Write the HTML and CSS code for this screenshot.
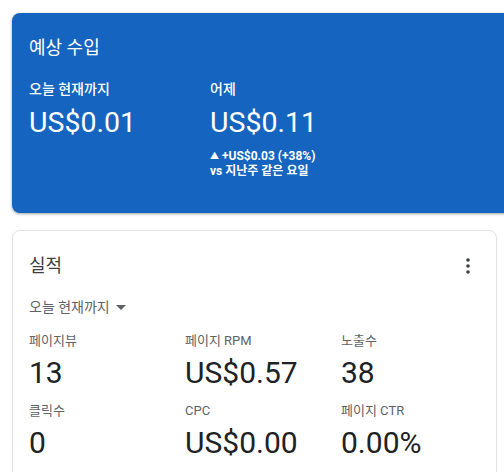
FILE: index.html
```html
<!DOCTYPE html>
<html lang="ko">
<head>
<meta charset="utf-8">
<link rel="stylesheet" href="styles.css">
</head>
<body>
<div class="page">
  <section class="card earnings">
    <h2 class="card-title">예상 수입</h2>
    <div class="earn-row">
      <div class="earn-col">
        <div class="earn-label">오늘 현재까지</div>
        <div class="earn-value">US$0.01</div>
      </div>
      <div class="earn-col">
        <div class="earn-label">어제</div>
        <div class="earn-value">US$0.11</div>
        <div class="earn-delta"><span class="tri">▲</span> +US$0.03 (+38%)</div>
        <div class="earn-delta">vs 지난주 같은 요일</div>
      </div>
    </div>
  </section>

  <section class="card perf">
    <div class="perf-head">
      <h2 class="card-title dark">실적</h2>
      <svg class="kebab" width="4" height="16" viewBox="0 0 4 16" aria-hidden="true">
        <circle cx="2" cy="2" r="1.8" fill="#3c4043"/>
        <circle cx="2" cy="8" r="1.8" fill="#3c4043"/>
        <circle cx="2" cy="14" r="1.8" fill="#3c4043"/>
      </svg>
    </div>
    <div class="range">오늘 현재까지 <span class="caret"></span></div>
    <div class="metrics">
      <div class="metric"><div class="m-label">페이지뷰</div><div class="m-value">13</div></div>
      <div class="metric"><div class="m-label">페이지 RPM</div><div class="m-value">US$0.57</div></div>
      <div class="metric"><div class="m-label">노출수</div><div class="m-value">38</div></div>
      <div class="metric"><div class="m-label">클릭수</div><div class="m-value">0</div></div>
      <div class="metric"><div class="m-label">CPC</div><div class="m-value">US$0.00</div></div>
      <div class="metric"><div class="m-label">페이지 CTR</div><div class="m-value">0.00%</div></div>
    </div>
  </section>
</div>
</body>
</html>
```

FILE: styles.css
```css
html, body {
  margin: 0;
  padding: 0;
  background: #ffffff;
  overflow: hidden;
}
body {
  font-family: Roboto, "Noto Sans CJK KR", sans-serif;
  width: 504px;
  height: 472px;
}
.page {
  padding: 13px 0 0 12px;
  display: flex;
  flex-direction: column;
  gap: 17px;
  overflow: hidden;
  height: 459px;
}
.card {
  box-sizing: border-box;
  border-radius: 8px;
  flex: none;
}
.earnings {
  width: 520px;
  height: 200px;
  background: #1565c0;
  color: #ffffff;
  padding: 22px 17px 0;
  box-shadow: 0 1px 2px rgba(60,64,67,0.3), 0 1px 3px 1px rgba(60,64,67,0.15);
}
.card-title {
  margin: 0;
  font-size: 18px;
  font-weight: 400;
  line-height: 26px;
}
.earn-row {
  display: flex;
  margin-top: 18px;
}
.earn-col {
  width: 181px;
}
.earn-label {
  font-size: 14px;
  font-weight: 500;
  line-height: 20px;
}
.earn-value {
  font-size: 28.5px;
  line-height: 36px;
  margin-top: 6px;
}
.earn-delta {
  font-size: 12px;
  font-weight: 700;
  line-height: 15px;
}
.tri {
  font-size: 9px;
  vertical-align: 1px;
}
.earn-value + .earn-delta {
  margin-top: 8px;
}
.perf {
  width: 485px;
  height: 260px;
  border: 1px solid #e3e3e3;
  padding: 22px 16px 0;
  box-shadow: 0 1px 2px rgba(60,64,67,0.08);
}
.perf-head {
  display: flex;
  justify-content: space-between;
  align-items: center;
}
.dark {
  color: #3c4043;
}
.kebab {
  margin-right: 10px;
}
.range {
  margin-top: 18px;
  font-size: 14px;
  line-height: 20px;
  color: #5f6368;
  display: flex;
  align-items: center;
  gap: 6px;
}
.caret {
  width: 0;
  height: 0;
  border-left: 5px solid transparent;
  border-right: 5px solid transparent;
  border-top: 5px solid #5f6368;
}
.metrics {
  margin-top: 15px;
  display: grid;
  grid-template-columns: 156px 156px 156px;
  row-gap: 10px;
}
.m-label {
  font-size: 13px;
  line-height: 18px;
  color: #5f6368;
}
.m-value {
  font-size: 30px;
  line-height: 38px;
  color: #202124;
  margin-top: 4px;
}
```
